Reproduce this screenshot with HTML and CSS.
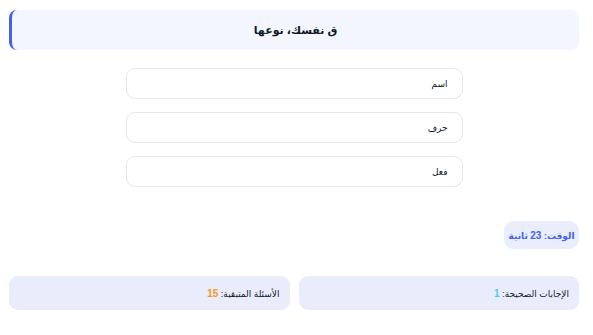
FILE: index.html
```html
<!DOCTYPE html>
<html lang="ar" dir="rtl">
<head>
<meta charset="utf-8">
<link rel="stylesheet" href="styles.css">
</head>
<body>
<div class="page">
  <div class="question"><span>ق نفسك، نوعها</span></div>
  <div class="options">
    <div class="option"><span>اسم</span></div>
    <div class="option"><span>حرف</span></div>
    <div class="option"><span>فعل</span></div>
  </div>
  <div class="timer-row">
    <div class="timer"><span>الوقت: <b>23</b> ثانية</span></div>
  </div>
  <div class="stats">
    <div class="stat"><span>الإجابات الصحيحة: <b class="correct">1</b></span></div>
    <div class="stat"><span>الأسئلة المتبقية: <b class="remaining">15</b></span></div>
  </div>
</div>
</body>
</html>
```

FILE: styles.css
```css
html, body {
  margin: 0;
  padding: 0;
  background: #ffffff;
}
body {
  font-family: "Liberation Sans", "DejaVu Sans", sans-serif;
  color: #1f2937;
}
.page {
  padding: 10px 14px 0 9px;
  display: flex;
  flex-direction: column;
}
.question {
  height: 40px;
  box-sizing: border-box;
  background: #f3f6ff;
  border-left: 3px solid #4361ee;
  border-radius: 8px;
  display: flex;
  align-items: center;
  justify-content: center;
  font-size: 11px;
  font-weight: bold;
  color: #111827;
}
.options {
  margin: 18px auto 0;
  width: 337px;
  display: flex;
  flex-direction: column;
  gap: 13px;
}
.option {
  height: 31px;
  box-sizing: border-box;
  border: 1px solid #e5e7eb;
  border-radius: 9px;
  background: #fff;
  display: flex;
  align-items: center;
  padding: 0 14px;
  font-size: 9px;
  color: #111827;
}
.timer-row {
  margin-top: 34px;
  display: flex;
}
.timer {
  height: 28px;
  width: 75px;
  box-sizing: border-box;
  background: #e9edfc;
  border-radius: 10px;
  display: flex;
  align-items: center;
  justify-content: center;
  font-size: 9px;
  font-weight: bold;
  color: #4361ee;
  white-space: nowrap;
}
.timer b { font-size: 10px; }
.stats {
  margin-top: 27px;
  display: grid;
  grid-template-columns: 1fr 1fr;
  gap: 9px;
}
.stat {
  height: 34px;
  box-sizing: border-box;
  background: #e9edfb;
  border-radius: 9px;
  display: flex;
  align-items: center;
  padding: 0 10px;
  font-size: 9px;
  color: #111827;
}
.stat b { font-size: 10px; }
.correct { color: #4cc9f0; }
.remaining { color: #f8961e; }
```
